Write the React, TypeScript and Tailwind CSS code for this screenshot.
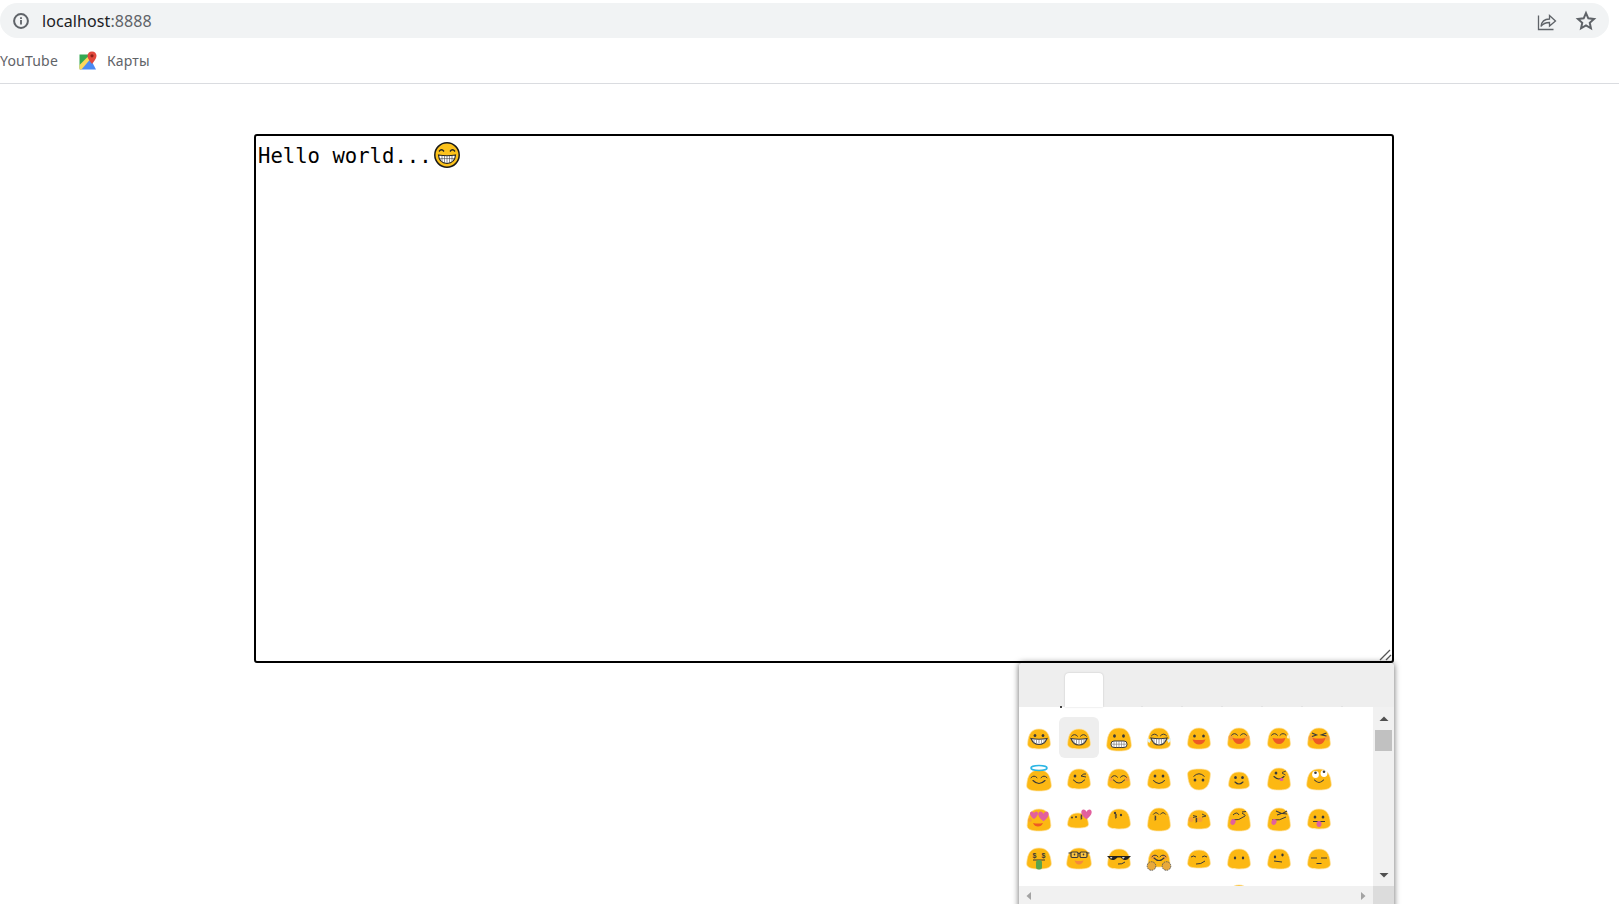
import React from "react";

const Y = "#fcb813";
const D = "#3a3a3a";
const R = "#ee5a24";
const C = "#f79a3e";
const P = "#e2609e";

function blobPath(cx: number, top: number, bottom: number, w: number) {
  const h = bottom - top;
  const f = (n: number) => n.toFixed(2);
  return `M${f(cx)} ${f(top)}C${f(cx - w * 0.32)} ${f(top)} ${f(cx - w * 0.44)} ${f(top + h * 0.26)} ${f(cx - w * 0.47)} ${f(top + h * 0.68)}C${f(cx - w * 0.52)} ${f(bottom - h * 0.06)} ${f(cx - w * 0.28)} ${f(bottom)} ${f(cx)} ${f(bottom)}C${f(cx + w * 0.28)} ${f(bottom)} ${f(cx + w * 0.52)} ${f(bottom - h * 0.06)} ${f(cx + w * 0.47)} ${f(top + h * 0.68)}C${f(cx + w * 0.44)} ${f(top + h * 0.26)} ${f(cx + w * 0.32)} ${f(top)} ${f(cx)} ${f(top)}Z`;
}

const B = ({ x = 0, t = -10, b = 10, w = 24 }: { x?: number; t?: number; b?: number; w?: number }) => (
  <path d={blobPath(x, t, b, w)} fill={Y} stroke="#fde3a0" strokeWidth="0.7" />
);
const Dot = ({ x, y, r = 1.6 }: { x: number; y: number; r?: number }) => <ellipse cx={x} cy={y} rx={r * 0.85} ry={r} fill={D} />;
const Arc = ({ x, y, w = 3 }: { x: number; y: number; w?: number }) => (
  <path d={`M${x - w} ${y + 1.2}Q${x} ${y - 2.2} ${x + w} ${y + 1.2}`} fill="none" stroke={D} strokeWidth="1" strokeLinecap="round" />
);
const Smile = ({ x = 0, y = 2, w = 5, d = 3 }: { x?: number; y?: number; w?: number; d?: number }) => (
  <path d={`M${x - w} ${y}Q${x} ${y + d * 2} ${x + w} ${y}`} fill="none" stroke={D} strokeWidth="1.1" strokeLinecap="round" />
);
const Open = ({ x = 0, y = 1, w = 5.5, d = 5, fill = R }: { x?: number; y?: number; w?: number; d?: number; fill?: string }) => (
  <path d={`M${x - w} ${y}Q${x} ${y + 1} ${x + w} ${y}Q${x + w * 0.7} ${y + d} ${x} ${y + d}Q${x - w * 0.7} ${y + d} ${x - w} ${y}Z`} fill={fill} />
);
const Grin = ({ y = 0, w = 8.5, d = 6.5 }: { y?: number; w?: number; d?: number }) => (
  <g>
    <path d={`M${-w} ${y}Q0 ${y + 1.5} ${w} ${y}Q${w * 0.7} ${y + d} 0 ${y + d}Q${-w * 0.7} ${y + d} ${-w} ${y}Z`} fill="#fff" stroke={D} strokeWidth="1.2" />
    {[-5, -2.5, 0, 2.5, 5].map((n) => (
      <line key={n} x1={n} x2={n} y1={y + 0.8} y2={y + d - 0.8} stroke="#777" strokeWidth="0.7" />
    ))}
  </g>
);
const Cheek = ({ x, y, r = 2.6 }: { x: number; y: number; r?: number }) => <circle cx={x} cy={y} r={r} fill={C} opacity="0.75" />;
const Tongue = ({ x, y, rot = 0 }: { x: number; y: number; rot?: number }) => (
  <ellipse cx={x} cy={y} rx="2.5" ry="3" fill={P} transform={`rotate(${rot} ${x} ${y})`} />
);
const Kiss = ({ x, y }: { x: number; y: number }) => (
  <path d={`M${x} ${y - 2}q1.6 1 0 2q1.6 1 0 2`} fill="none" stroke={D} strokeWidth="1.1" strokeLinecap="round" />
);
const Heart = ({ x, y, s = 1, fill = P }: { x: number; y: number; s?: number; fill?: string }) => (
  <path transform={`translate(${x} ${y}) scale(${s})`} d="M0 3.5C-4.5 .5 -4 -3 -2 -3C-1 -3 -.3 -2.3 0 -1.4C.3 -2.3 1 -3 2 -3C4 -3 4.5 .5 0 3.5Z" fill={fill} />
);
const Dollar = ({ x, y }: { x: number; y: number }) => (
  <text x={x} y={y} fontSize="7" fontWeight="700" textAnchor="middle" fill={D} fontFamily="'Liberation Sans', sans-serif">$</text>
);

const rows: React.ReactNode[][] = [
  [
    <><B /><Dot x={-4} y={-3.5} /><Dot x={4} y={-3.5} /><Grin y={-0.5} w={8} d={6} /></>,
    <><B /><Arc x={-4.5} y={-4} /><Arc x={4.5} y={-4} /><Grin y={-0.5} w={8} d={6.5} /></>,
    <><B t={-11} b={12} w={26} /><Dot x={-4.5} y={-3} r={1.7} /><Dot x={4.5} y={-3} r={1.7} /><rect x="-8" y="2" width="16" height="6.5" rx="3" fill="#fff" stroke={D} strokeWidth="1" /><path d="M-8 5.2H8M-5 2V8.5M-2.5 2V8.5M0 2V8.5M2.5 2V8.5M5 2V8.5" stroke="#777" strokeWidth="0.6" /></>,
    <><B t={-11} b={10} /><Arc x={-4.5} y={-4.5} /><Arc x={4.5} y={-4.5} /><Grin y={-1} w={8} d={7} /><path d="M-11.5 -1q-1 3 2 5l1.5 -3zM11.5 -1q1 3 -2 5l-1.5 -3z" fill="#dff4fb" /></>,
    <><B t={-11} b={10} /><Dot x={-4.5} y={-3} /><Dot x={4.5} y={-3} /><Open y={0.5} w={6.5} d={5} /></>,
    <><B t={-11} b={10} /><Cheek x={-8} y={-1.5} /><Cheek x={8} y={-1.5} /><Arc x={-4.5} y={-5} /><Arc x={4.5} y={-5} /><Open y={-1} w={6.5} d={6} /></>,
    <><B t={-11} b={10} /><Arc x={-4.5} y={-5} /><Arc x={4} y={-5} /><Open y={-1} w={6.5} d={6} /><path d="M9 -5q2.5 2.5 1 4.5q-2 .3 -2.2 -1.6z" fill="#fdf2c9" /></>,
    <><B t={-11} b={10} /><Cheek x={-8} y={-1} /><Cheek x={8} y={-1} /><path d="M-7 -6L-2.5 -4L-7 -2.5M7.5 -6L2.5 -4.2L7.5 -3" fill="none" stroke={D} strokeWidth="1.2" /><Open y={-1} w={6.5} d={6.5} /></>,
  ],
  [
    <><B t={-9} b={12} w={26} /><ellipse cx="0" cy="-11" rx="8" ry="2.5" fill="none" stroke="#2cb6e4" strokeWidth="1.6" /><Arc x={-5} y={-2.5} /><Arc x={5} y={-2.5} /><Smile y={1.5} w={6} d={3} /></>,
    <><B t={-10} b={10} /><Dot x={-4} y={-3} /><path d="M2 -3Q5 -6 7 -5M2 -3L7 -2" fill="none" stroke={D} strokeWidth="1" /><Smile y={1} w={5.5} d={3} /></>,
    <><B t={-10} b={10} /><Cheek x={-8} y={0} r={2.2} /><Cheek x={8} y={0} r={2.2} /><Arc x={-4.5} y={-3} /><Arc x={4.5} y={-3} /><Smile y={1} w={5.5} d={3} /></>,
    <><B t={-10} b={10} /><Dot x={-4} y={-3} /><Dot x={4} y={-3} /><Smile y={1.5} w={5.5} d={3} /></>,
    <><path d={blobPath(0, -11, 10, 24)} transform="rotate(180)" fill={Y} stroke="#fde3a0" strokeWidth="0.7" /><Dot x={-4} y={1} /><Dot x={4} y={1} /><path d="M-5.5 -2.5Q0 -8 5.5 -2.5" fill="none" stroke={D} strokeWidth="1" /></>,
    <><B t={-7} b={10} w={22} /><Dot x={-3.5} y={-1.5} /><Dot x={3.5} y={-1.5} /><Smile y={3} w={4} d={2} /></>,
    <><B t={-11} b={11} w={24} /><Dot x={-3} y={-6} /><path d="M3 -6.5L7 -8M3 -6L6.5 -4" stroke={D} strokeWidth="0.9" /><Smile y={-2.5} w={5} d={2.5} /><ellipse cx="2.5" cy="0.5" rx="2" ry="1.5" fill={P} /></>,
    <><B t={-10} b={11} w={26} /><circle cx="-3.5" cy="-4.5" r="3.4" fill="#fff" /><circle cx="5" cy="-5.5" r="3.4" fill="#fff" /><circle cx="-3.5" cy="-6.2" r="1.3" fill={D} /><circle cx="5" cy="-7.2" r="1.3" fill={D} /><Smile y={1} w={4.5} d={2.5} /></>,
  ],
  [
    <><B t={-10} b={12} w={25} /><Cheek x={-9} y={1} r={2} /><Heart x={-5} y={-4} s={1.15} /><Heart x={4.5} y={-3} s={1.5} /><Open x={-1} y={4} w={5} d={3.5} /></>,
    <><B t={-6} b={9} w={22} x={-1} /><Dot x={-7} y={-1.5} r={1.1} /><Kiss x={2} y={-2} /><Dot x={-3} y={-2} r={1.1} /><Heart x={7.5} y={-5} s={1.5} /></>,
    <><B t={-10} b={10} /><Kiss x={-3.5} y={-3} /><Dot x={2} y={-4} r={1.3} /><Dot x={-4} y={-6} r={1.3} /></>,
    <><B t={-11} b={12} w={24} /><Arc x={-3} y={-6} w={2.5} /><Arc x={4} y={-6} w={2.5} /><Kiss x={-4} y={-1} /></>,
    <><B t={-9} b={10} /><Cheek x={-8} y={0.5} /><Cheek x={1} y={0.5} /><path d="M-6 -3.5L-2 -2.5L-6 -1.5M3 -5L7 -3L3 -2" fill="none" stroke={D} strokeWidth="0.9" /><Kiss x={-3} y={1} /></>,
    <><B t={-11} b={12} w={24} /><path d="M-6 -4Q-2 -8 0 -4" fill="none" stroke={D} strokeWidth="1" /><path d="M3 -7L7 -7.5M3 -6L6.5 -3.5" stroke={D} strokeWidth="1" /><path d="M-7 1Q0 2 6 -3" fill="none" stroke={D} strokeWidth="1" /><Tongue x={-6} y={3} rot={20} /></>,
    <><B t={-11} b={12} w={24} /><path d="M-3 -8L2.5 -5.5L-2 -4M8 -8L3.5 -5.5L8 -5" fill="none" stroke={D} strokeWidth="1.1" /><path d="M-7 1Q1 2 7 -2" fill="none" stroke={D} strokeWidth="1" /><Tongue x={-5} y={3} rot={20} /></>,
    <><B t={-10} b={10} /><Dot x={-4} y={-2} /><Dot x={4} y={-2} /><line x1="-6" x2="6" y1="2.5" y2="2.5" stroke={D} strokeWidth="1" /><Tongue x={0} y={5} /></>,
  ],
  [
    <><B t={-11} b={10} w={26} /><Dollar x={-4.5} y={-1.5} /><Dollar x={4.5} y={-1.5} /><line x1="-6" x2="6" y1="1" y2="1" stroke={D} strokeWidth="1" /><rect x="-3" y="1" width="6" height="9.5" rx="2.5" fill="#5aa34f" /></>,
    <><B t={-11} b={10} w={26} /><rect x="-8" y="-7" width="7" height="5.5" rx="1.2" fill="#fff3" stroke={D} strokeWidth="1.2" /><rect x="1" y="-7" width="7" height="5.5" rx="1.2" fill="#fff3" stroke={D} strokeWidth="1.2" /><path d="M-1 -5.5H1M-8 -6H-10.5M8 -6H10.5" stroke={D} strokeWidth="1" /><Dot x={-4.5} y={-4.5} r={1} /><Dot x={4.5} y={-4.5} r={1} /><Open y={1.5} w={4.5} d={4} fill="#f58a3a" /></>,
    <><B t={-10} b={10} /><path d="M-12 -3H12L10 -1Q8 2 4 .5L1.5 -1.5H-1.5L-4 .5Q-8 2 -10 -1Z" fill="#222" /><path d="M-9 -2L-6.5 -2L-8 0zM3 -2L6 -2L4 0z" fill="#ddd" /><path d="M-1 5Q3 5.5 6 3" fill="none" stroke={D} strokeWidth="1" /></>,
    <><B t={-10} b={8} w={23} /><Cheek x={-6} y={-2} /><Cheek x={6} y={-2} /><Arc x={-4} y={-3.5} /><Arc x={4} y={-3.5} /><Smile y={-1} w={5} d={2.5} /><circle cx="-7.5" cy="7" r="4.3" fill="#e8a93a" stroke="#5c5c5c" strokeWidth="1" strokeDasharray="1.6 0.8" /><circle cx="7.5" cy="7" r="4.3" fill="#e8a93a" stroke="#5c5c5c" strokeWidth="1" strokeDasharray="1.6 0.8" /></>,
    <><B t={-9} b={9} /><path d="M-8 -2Q-5.5 -4 -3 -2M3 -2Q5.5 -4 8 -2" fill="none" stroke={D} strokeWidth="1" /><path d="M-3 5Q2 5.5 6 2" fill="none" stroke={D} strokeWidth="1" /></>,
    <><B t={-10} b={10} /><Dot x={-4} y={-1} r={1.4} /><Dot x={4} y={-1} r={1.4} /></>,
    <><B t={-10} b={10} /><Dot x={-4} y={-2} r={1.4} /><Dot x={3.5} y={-4} r={1.4} /><line x1="-5" x2="3" y1="2" y2="3" stroke={D} strokeWidth="1.1" /></>,
    <><B t={-10} b={10} /><path d="M-8 -1H-2M2 -1H8M-2.5 4.5H2.5" stroke={D} strokeWidth="1.2" /></>,
  ],
  [null, null, null, null, null, <B t={-14} b={8} />, null, null],
];

function Emoji({ children, active }: { children: React.ReactNode; active?: boolean }) {
  return (
    <div className={active ? "-mt-px flex h-[41px] w-10 items-center justify-center rounded-md bg-[#eeeeee]" : "flex h-10 w-10 items-center justify-center"}>
      <svg width="32" height="32" viewBox="-16 -17 32 32" className="block">{children}</svg>
    </div>
  );
}

function Arrow({ d, className }: { d: string; className: string }) {
  return (
    <svg width="10" height="10" viewBox="0 0 10 10" className={className}>
      <path d={d} fill="currentColor" />
    </svg>
  );
}

export default function App() {
  return (
    <div className="h-[904px] w-[1619px] overflow-hidden bg-white font-['Noto_Sans',sans-serif]">
      <header className="h-[84px] border-b border-[#dadce0]">
        <div className="flex h-[38px] items-end">
          <div className="flex h-[35px] w-[1609px] items-center rounded-full bg-[#f1f3f4] pl-[13px] pr-[12px]">
            <svg width="16" height="16" viewBox="0 0 16 16" className="shrink-0">
              <circle cx="8" cy="8" r="6.9" fill="none" stroke="#5f6368" strokeWidth="2" />
              <path d="M8 7V11.5M8 4.2V5.9" stroke="#5f6368" strokeWidth="1.8" />
            </svg>
            <span className="ml-[13px] text-[16px] tracking-[0.09px] text-[#202124]">
              localhost<span className="text-[#5f6368]">:8888</span>
            </span>
            <span className="flex-1" />
            <svg width="20" height="20" viewBox="0 0 20 20" className="shrink-0" fill="none" stroke="#5f6368" strokeWidth="1.3">
              <path d="M1.5 4.5V18.5H16.5" />
              <path d="M4 15.5C4.5 11 7.5 8 12.5 8V4.5L18.5 10L12.5 15V11.5C9 11.5 6 12.5 4 15.5Z" />
            </svg>
            <svg width="22" height="22" viewBox="0 0 20 20" className="ml-[18px] shrink-0" fill="none" stroke="#5f6368" strokeWidth="1.8" strokeLinejoin="miter">
              <path d="M10 2.8L12.1 7.6L17.3 8.1L13.4 11.6L14.5 16.7L10 14.1L5.5 16.7L6.6 11.6L2.7 8.1L7.9 7.6Z" />
            </svg>
          </div>
        </div>
        <div className="flex h-[45px] items-center text-[14px] tracking-[0.2px] text-[#5f6368]">
          <span>YouTube</span>
          <svg width="20" height="20" viewBox="0 0 20 20" className="ml-[20px] shrink-0">
            <path d="M1.5 3.5H12.5L11 11L1.5 18Z" fill="#34a853" />
            <path d="M1.5 18.5L12.5 8L18 18.5Z" fill="#4a8af4" />
            <path d="M1.5 14L9.5 6L12 8.5L3.5 18.5H1.5Z" fill="#fbd75b" />
            <path d="M14 0.5C11.2 .5 9.5 2.6 9.5 4.8C9.5 8 14 13 14 13C14 13 18.5 8 18.5 4.8C18.5 2.6 16.8 .5 14 .5Z" fill="#e2483d" />
            <circle cx="14" cy="4.8" r="1.6" fill="#8e1f18" />
          </svg>
          <span className="ml-[9px]">Карты</span>
        </div>
      </header>

      <main className="ml-[254px] flex w-[1140px] flex-col pt-[50px]">
        <div className="relative h-[529px] w-[1140px] rounded-[3px] border-2 border-black pl-[2px] pt-[5px] font-['DejaVu_Sans_Mono',monospace] text-[20.6px] leading-[30px] text-black">
          Hello world...
          <svg width="26" height="26" viewBox="-13 -13 26 26" className="ml-[2px] inline-block align-[-5px]">
            <circle r="12.2" fill="#fcc21b" stroke="#1a1a1a" strokeWidth="1.5" />
            <path d="M-8 -3.5Q-5.5 -7 -3 -3.5M3 -3.5Q5.5 -7 8 -3.5" fill="none" stroke="#222" strokeWidth="1.3" />
            <path d="M-8.5 0Q0 1.5 8.5 0Q8 8 0 8.5Q-8 8 -8.5 0Z" fill="#fff" stroke="#222" strokeWidth="1.1" />
            <path d="M-8 3.6H8M-5 0.6V7M-2.5 0.8V8M0 0.9V8.5M2.5 0.8V8M5 0.6V7" stroke="#444" strokeWidth="0.6" />
          </svg>
          <svg width="14" height="14" viewBox="0 0 14 14" className="absolute bottom-0 right-0">
            <path d="M2 13L12 3M8 13L13 8" stroke="#555" strokeWidth="1.3" fill="none" />
          </svg>
        </div>

        <div className="ml-auto flex h-[260px] w-[375px] shrink-0 flex-col rounded-t-[4px] bg-white shadow-[0_0_6px_rgba(0,0,0,0.6)]">
          <div className="flex h-[44px] shrink-0 rounded-t-[4px] bg-[#eeeeee] pl-[41px]">
            <div className="h-full w-[5px] self-end">
              <div className="mt-[43px] h-[2px] w-[2px] bg-[#444]" />
            </div>
            <div className="mt-[10px] h-[34px] w-[38px] rounded-t-[4px] bg-white shadow-[0_0_2px_rgba(0,0,0,0.2)]" />
            {[0, 1, 2, 3, 4, 5].map((i) => (
              <div key={i} className="ml-[38px] mt-[43px] h-px w-[2px] bg-[#e2e2e2]" />
            ))}
          </div>

          <div className="flex min-h-0 flex-1">
            <div className="flex min-w-0 flex-1 flex-col">
              <div className="h-[179px] overflow-hidden pt-[11px]">
                {rows.map((row, r) => (
                  <div key={r} className="flex h-10">
                    {row.map((e, c) => (
                      <Emoji key={c} active={r === 0 && c === 1}>{e}</Emoji>
                    ))}
                  </div>
                ))}
              </div>
              <div className="flex h-[18px] items-center justify-between bg-[#f1f1f1] px-[5px] pt-[2px]">
                <Arrow d="M2.5 5L7 1V9Z" className="text-[#a3a3a3]" />
                <Arrow d="M7.5 5L3 1V9Z" className="text-[#a3a3a3]" />
              </div>
            </div>
            <div className="flex w-[21px] shrink-0 flex-col">
              <div className="flex h-[179px] flex-col items-center bg-[#f1f1f1]">
                <Arrow d="M5 2.5L9.5 7H.5Z" className="mt-[7px] text-[#505050]" />
                <div className="mt-[6px] h-[21px] w-[17px] bg-[#c1c1c1]" />
                <div className="flex-1" />
                <Arrow d="M5 7.5L.5 3H9.5Z" className="mb-[6px] text-[#505050]" />
              </div>
              <div className="h-[18px] bg-[#dcdcdc]" />
            </div>
          </div>
        </div>
      </main>
    </div>
  );
}
